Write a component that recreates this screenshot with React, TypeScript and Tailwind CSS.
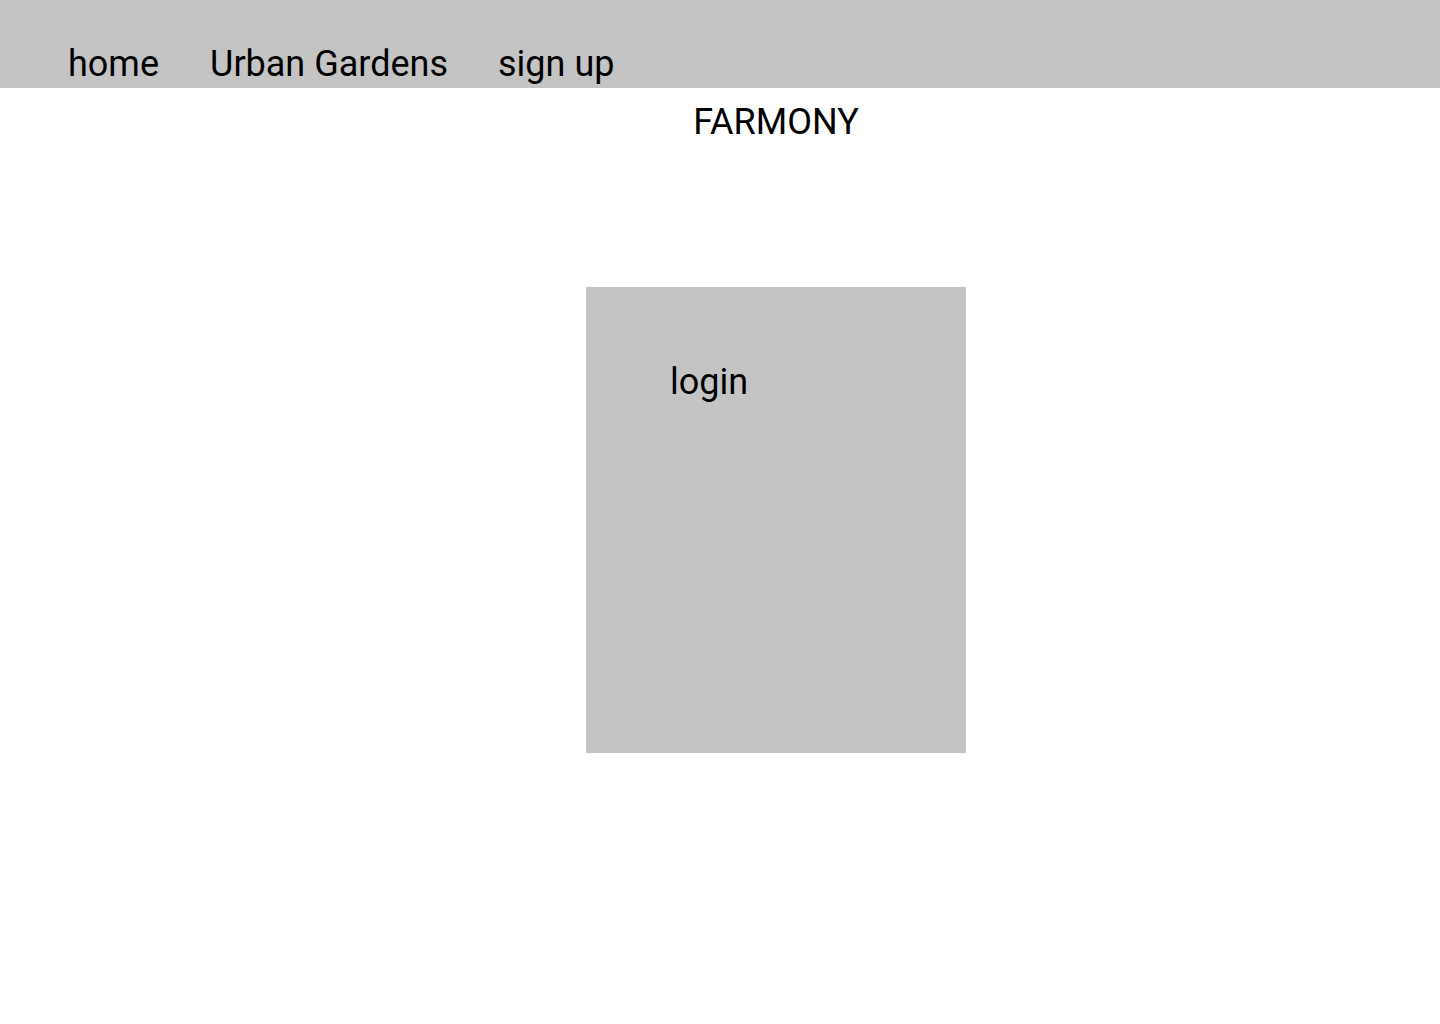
export default function App() {
  const links = ["home", "Urban Gardens", "sign up"];
  return (
    <div className="min-h-screen bg-white text-black font-['Roboto','Liberation_Sans',sans-serif]">
      <nav className="h-[88px] bg-[#c4c4c4] flex items-start pl-[68px] pt-[43px]">
        {links.map((l, i) => (
          <a
            key={l}
            className={`text-[36px] leading-[42px] ${i === 1 ? "ml-[51px]" : i === 2 ? "ml-[50px]" : ""}`}
          >
            {l}
          </a>
        ))}
      </nav>
      <main className="flex flex-col items-center pl-[112px]">
        <h1 className="mt-[13px] text-[36px] leading-[42px]">FARMONY</h1>
        <section className="mt-[144px] w-[380px] h-[466px] bg-[#c4c4c4] pl-[84px] pt-[74px]">
          <h2 className="text-[36px] leading-[42px]">login</h2>
        </section>
      </main>
    </div>
  );
}
